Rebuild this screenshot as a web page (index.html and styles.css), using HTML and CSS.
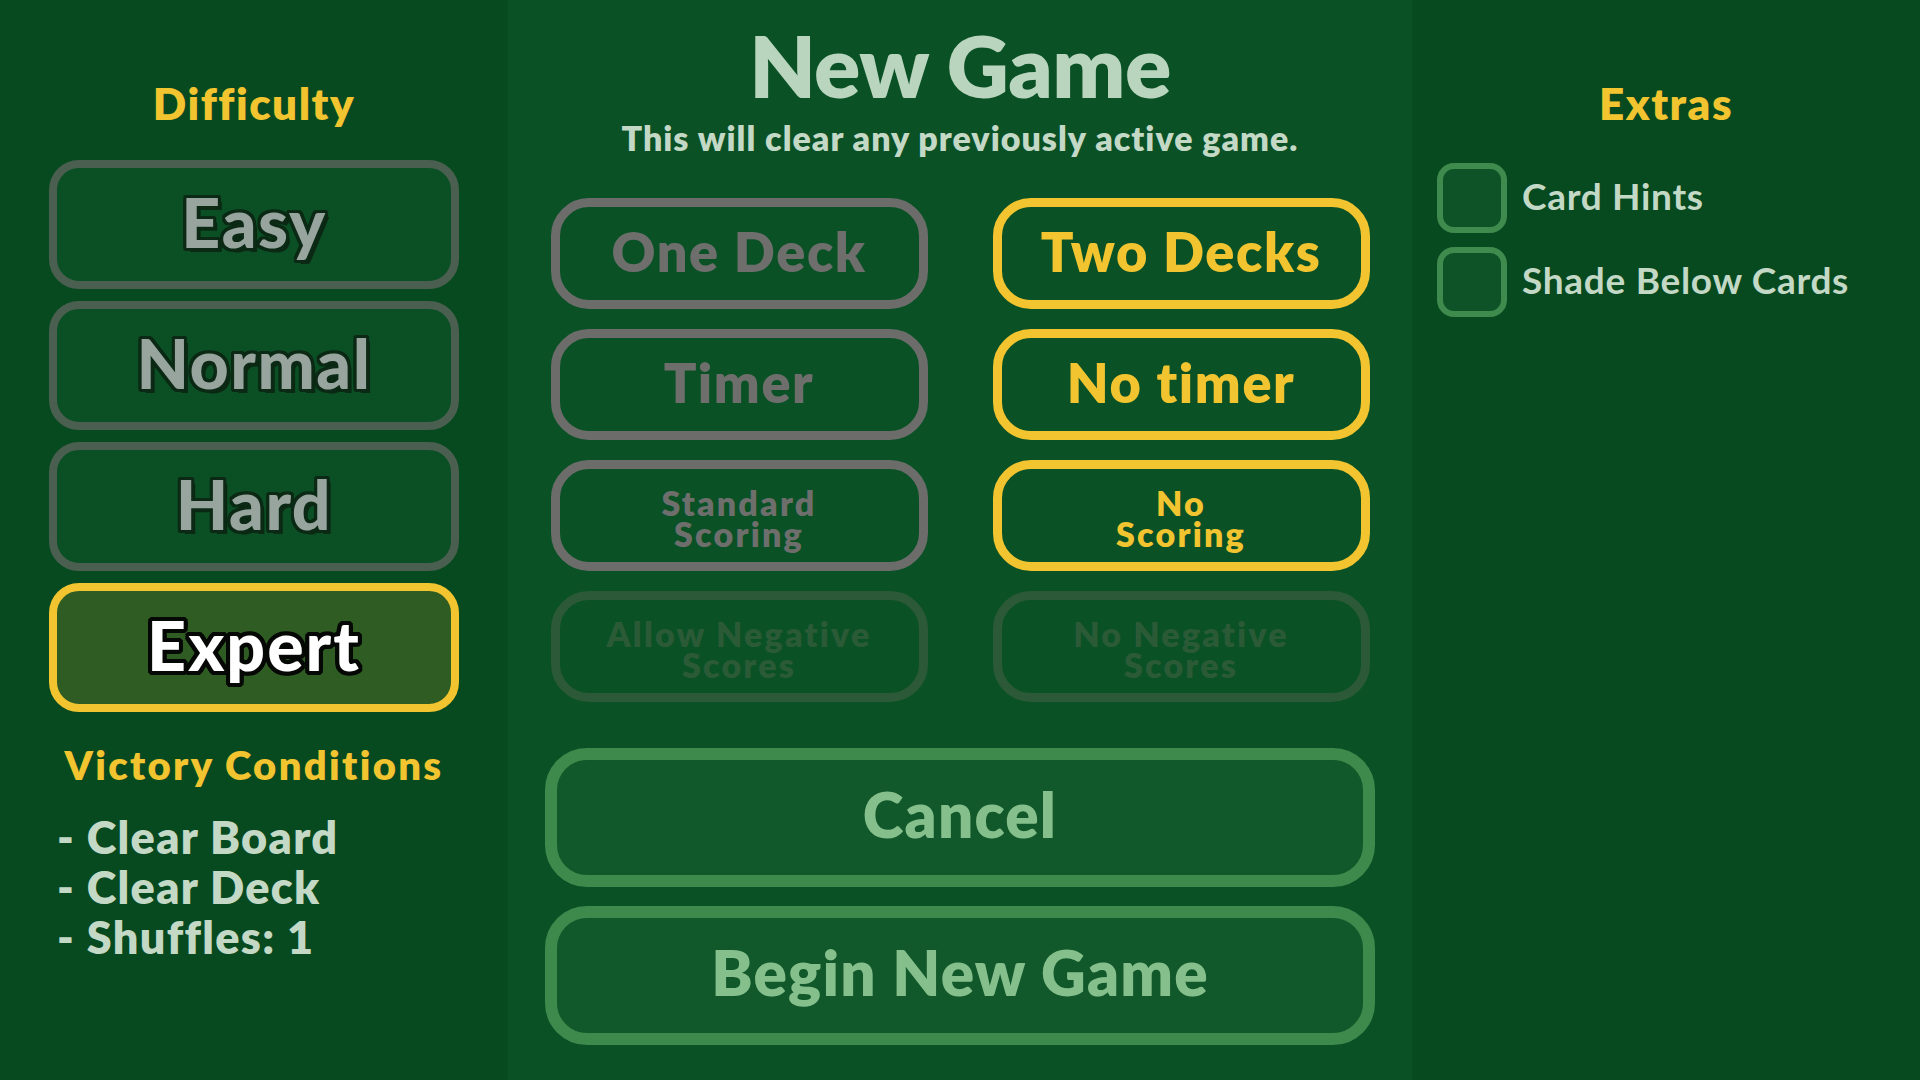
FILE: index.html
```html
<!DOCTYPE html>
<html lang="en">
<head>
<meta charset="utf-8">
<title>New Game</title>
<link rel="stylesheet" href="styles.css">
</head>
<body>
<div class="screen">
  <aside class="side side-left">
    <h2 class="side-title">Difficulty</h2>
    <div class="diff-list">
      <div class="diff-btn">Easy</div>
      <div class="diff-btn">Normal</div>
      <div class="diff-btn">Hard</div>
      <div class="diff-btn diff-selected">Expert</div>
    </div>
    <h3 class="victory-title">Victory Conditions</h3>
    <ul class="victory-list">
      <li>- Clear Board</li>
      <li>- Clear Deck</li>
      <li>- Shuffles: 1</li>
    </ul>
  </aside>

  <main class="center">
    <h1 class="title">New Game</h1>
    <p class="subtitle">This will clear any previously active game.</p>
    <div class="options">
      <div class="opt opt-off">One Deck</div>
      <div class="opt opt-on">Two Decks</div>
      <div class="opt opt-off">Timer</div>
      <div class="opt opt-on">No timer</div>
      <div class="opt opt-off opt-small">Standard<br>Scoring</div>
      <div class="opt opt-on opt-small">No<br>Scoring</div>
      <div class="opt opt-disabled opt-small">Allow Negative<br>Scores</div>
      <div class="opt opt-disabled opt-small">No Negative<br>Scores</div>
    </div>
    <div class="actions">
      <div class="action-btn">Cancel</div>
      <div class="action-btn">Begin New Game</div>
    </div>
  </main>

  <aside class="side side-right">
    <h2 class="side-title">Extras</h2>
    <div class="checks">
      <div class="check-row"><span class="check-box"></span><span class="check-label">Card Hints</span></div>
      <div class="check-row"><span class="check-box"></span><span class="check-label">Shade Below Cards</span></div>
    </div>
  </aside>
</div>
</body>
</html>
```

FILE: styles.css
```css
* { box-sizing: border-box; }

html, body {
  margin: 0;
  padding: 0;
  width: 1920px;
  height: 1080px;
  overflow: hidden;
  background: #074a20;
  font-family: "Lato", "Open Sans", sans-serif;
}

.screen {
  display: grid;
  grid-template-columns: 508px 904px 508px;
  height: 1080px;
}

/* ---------- side panels ---------- */
.side {
  background: #074a20;
  display: flex;
  flex-direction: column;
  padding-top: 78px;
}

.side-left {
  align-items: center;
}

.side-title {
  margin: 0;
  font-size: 44px;
  line-height: 50px;
  font-weight: 800;
  letter-spacing: 1.5px;
  color: #f1c430;
  text-align: center;
}

.side-right .side-title {
  align-self: center;
}

.diff-list {
  margin-top: 32px;
  display: flex;
  flex-direction: column;
  gap: 12px;
  width: 410px;
}

.diff-btn {
  height: 129px;
  border: 8px solid #4b5f50;
  border-radius: 30px;
  background: #0b4f25;
  display: flex;
  align-items: center;
  justify-content: center;
  font-size: 68px;
  font-weight: 900;
  letter-spacing: 1.5px;
  color: #98a59e;
  padding-bottom: 6px;
  text-shadow:
    3px 0 0 #0b2914, -3px 0 0 #0b2914, 0 3px 0 #0b2914, 0 -3px 0 #0b2914,
    2px 2px 0 #0b2914, -2px 2px 0 #0b2914, 2px -2px 0 #0b2914, -2px -2px 0 #0b2914,
    3px 2px 0 #0b2914, -3px 2px 0 #0b2914, 3px -2px 0 #0b2914, -3px -2px 0 #0b2914,
    2px 3px 0 #0b2914, -2px 3px 0 #0b2914, 2px -3px 0 #0b2914, -2px -3px 0 #0b2914,
    4px 4px 0 #0b2914;
}

.diff-selected {
  border-color: #f1c430;
  background: #2e5c22;
  color: #ffffff;
  letter-spacing: 2px;
  text-shadow:
    4px 0 0 #050805, -4px 0 0 #050805, 0 4px 0 #050805, 0 -4px 0 #050805,
    3px 3px 0 #050805, -3px 3px 0 #050805, 3px -3px 0 #050805, -3px -3px 0 #050805,
    4px 2px 0 #050805, -4px 2px 0 #050805, 4px -2px 0 #050805, -4px -2px 0 #050805,
    2px 4px 0 #050805, -2px 4px 0 #050805, 2px -4px 0 #050805, -2px -4px 0 #050805;
}

.victory-title {
  margin: 30px 0 0;
  font-size: 40px;
  line-height: 46px;
  font-weight: 800;
  letter-spacing: 2.3px;
  color: #f1c430;
  text-align: center;
}

.victory-list {
  list-style: none;
  margin: 24px 0 0;
  padding: 0 0 0 57px;
  align-self: stretch;
}

.victory-list li {
  font-size: 45px;
  line-height: 50px;
  font-weight: 800;
  letter-spacing: 1.3px;
  color: #c3d9c6;
}

/* ---------- center ---------- */
.center {
  background: #0b5126;
  display: flex;
  flex-direction: column;
  align-items: center;
  padding-top: 20px;
}

.title {
  margin: 0;
  font-size: 86px;
  line-height: 90px;
  font-weight: 800;
  letter-spacing: -0.5px;
  color: #b9d5bd;
}

.subtitle {
  margin: 8px 0 0;
  font-size: 34px;
  line-height: 40px;
  font-weight: 800;
  letter-spacing: 1px;
  color: #c3d9c6;
}

.options {
  margin-top: 40px;
  display: grid;
  grid-template-columns: 377px 377px;
  column-gap: 65px;
  row-gap: 20px;
}

.opt {
  height: 111px;
  border: 9px solid;
  border-radius: 38px;
  display: flex;
  align-items: center;
  justify-content: center;
  text-align: center;
  font-size: 54px;
  font-weight: 800;
  letter-spacing: 1.6px;
  padding-bottom: 4px;
}

.opt-small {
  font-size: 34px;
  line-height: 31px;
  letter-spacing: 2.2px;
  padding-bottom: 0;
  padding-top: 4px;
}

.opt-off {
  border-color: #6c6d6b;
  color: #6e6f6d;
}

.opt-on {
  border-color: #f1c430;
  color: #f1c430;
}

.opt-disabled {
  border-color: #2c5937;
  color: #2b5a37;
}

.actions {
  margin-top: 46px;
  display: flex;
  flex-direction: column;
  gap: 19px;
  width: 830px;
}

.action-btn {
  height: 139px;
  border: 12px solid #3e8a4c;
  border-radius: 42px;
  background: #11582a;
  display: flex;
  align-items: center;
  justify-content: center;
  font-size: 62px;
  font-weight: 800;
  letter-spacing: 1.2px;
  color: #85bf8c;
  padding-bottom: 8px;
}

/* ---------- right ---------- */
.checks {
  margin-top: 35px;
  padding-left: 25px;
  display: flex;
  flex-direction: column;
  gap: 14px;
}

.check-row {
  display: flex;
  align-items: center;
  gap: 15px;
}

.check-box {
  width: 70px;
  height: 70px;
  border: 6px solid #3f8a4d;
  border-radius: 17px;
  background: #0e5327;
  flex: none;
}

.check-label {
  font-size: 37px;
  font-weight: 700;
  letter-spacing: 0.7px;
  color: #c3d9c6;
  padding-bottom: 5px;
}
```
